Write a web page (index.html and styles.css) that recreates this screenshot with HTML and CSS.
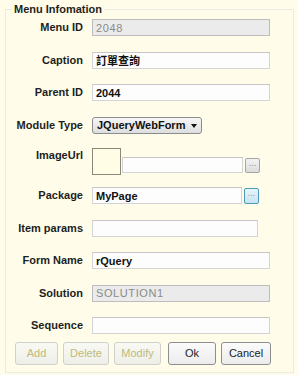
FILE: index.html
```html
<!DOCTYPE html>
<html lang="en">
<head>
<meta charset="UTF-8">
<meta name="viewport" content="width=device-width, initial-scale=1.0">
<title>Menu Infomation</title>
<link rel="stylesheet" href="styles.css">
</head>
<body>

<fieldset class="panel">
    <legend>Menu Infomation</legend>

    <div class="rows">
        <div class="row">
            <label>Menu ID</label>
            <input type="text" class="field locked" value="2048" readonly>
        </div>
        <div class="row">
            <label>Caption</label>
            <input type="text" class="field" value="訂單查詢">
        </div>
        <div class="row">
            <label>Parent ID</label>
            <input type="text" class="field" value="2044">
        </div>
        <div class="row">
            <label>Module Type</label>
            <div class="select">JQueryWebForm<span class="arrow"></span></div>
        </div>
        <div class="row tall">
            <label>ImageUrl</label>
            <div class="thumb"></div>
            <input type="text" class="field url">
            <button class="more">...</button>
        </div>
        <div class="row close">
            <label>Package</label>
            <input type="text" class="field short" value="MyPage">
            <button class="more active">...</button>
        </div>
        <div class="row">
            <label>Item params</label>
            <input type="text" class="field mid">
        </div>
        <div class="row">
            <label>Form Name</label>
            <input type="text" class="field" value="rQuery">
        </div>
        <div class="row">
            <label>Solution</label>
            <input type="text" class="field locked" value="SOLUTION1" readonly>
        </div>
        <div class="row">
            <label>Sequence</label>
            <input type="text" class="field">
        </div>
    </div>

    <div class="actions">
        <button class="btn off w-add">Add</button>
        <button class="btn off w-del">Delete</button>
        <button class="btn off w-mod">Modify</button>
        <button class="btn w-ok">Ok</button>
        <button class="btn w-cancel">Cancel</button>
    </div>
</fieldset>

</body>
</html>
```

FILE: styles.css
```css
body {
    font-family: 'Liberation Sans', Arial, sans-serif;
    font-size: 11px;
    margin: 0;
    padding: 0;
    background-color: #fffde9;
    color: #1e1e1e;
}
.panel {
    box-sizing: border-box;
    width: 289px;
    margin: 3px 0 4px 5px;
    padding: 0 0 7px 0;
    border: 1px solid #ebebe2;
    min-width: 0;
}
.panel legend {
    font-weight: bold;
    line-height: 13px;
    padding: 0 2px;
    margin-left: 6px;
}
.rows {
    padding-top: 3px;
}
.row {
    display: flex;
    align-items: center;
    height: 17px;
    margin-top: 15.5px;
}
.row:first-child {
    margin-top: 0;
}
.row label {
    flex: 0 0 77px;
    margin-right: 9px;
    text-align: right;
    font-weight: bold;
    line-height: 13px;
}
.row.tall {
    height: 27px;
    margin-top: 14px;
    align-items: flex-end;
}
.row.tall label {
    align-self: flex-start;
    padding-top: 1px;
}
.row.close {
    margin-top: 12.5px;
}
.field {
    box-sizing: border-box;
    width: 178px;
    height: 17px;
    margin: 0;
    padding: 0 3px;
    border: 1px solid #d4d4d4;
    border-top-color: #c6c6c6;
    background-color: #fdfdfd;
    font-family: 'Liberation Sans', 'Noto Sans CJK TC', sans-serif;
    font-size: 11px;
    font-weight: bold;
    color: #111;
    outline: none;
}
.field.locked {
    background-color: #ebebeb;
    border-color: #bdbdbd;
    color: #8a8a8a;
    font-weight: normal;
    letter-spacing: 0.6px;
}
.field.short {
    width: 150px;
}
.field.mid {
    width: 166px;
}
.field.url {
    width: 121px;
    height: 16px;
    margin: 0 0 2px 1px;
}
.thumb {
    box-sizing: border-box;
    width: 29px;
    height: 27px;
    border: 1px solid #8d8775;
    background-color: #fffde6;
}
.more {
    box-sizing: border-box;
    width: 15px;
    height: 15px;
    margin: 0 0 0 2px;
    padding: 0 0 3px 0;
    border: 1px solid #a5a5a5;
    border-radius: 2px;
    background: linear-gradient(#f2f2f2, #dcdcdc);
    color: #8f8f8f;
    font-family: 'DejaVu Sans', sans-serif;
    font-size: 8px;
    line-height: 8px;
    letter-spacing: 0;
}
.row.tall .more {
    margin-bottom: 2px;
}
.more.active {
    height: 16px;
    border-color: #4d9bb8;
    background: linear-gradient(#e6f5fb, #c6e4f1);
    color: #c77f95;
}
.select {
    box-sizing: border-box;
    position: relative;
    width: 110px;
    height: 17px;
    padding-left: 4px;
    border: 1px solid #8c8c8c;
    border-radius: 3px;
    background: linear-gradient(#f6f6f6, #dedede);
    font-weight: bold;
    line-height: 15px;
    color: #111;
}
.arrow {
    position: absolute;
    right: 4px;
    top: 6px;
    border-left: 3px solid transparent;
    border-right: 3px solid transparent;
    border-top: 4px solid #111;
}
.actions {
    display: flex;
    gap: 5px;
    margin: 7.5px 0 0 9px;
}
.btn {
    box-sizing: border-box;
    height: 23px;
    padding: 0;
    border: 1px solid #8e8e8e;
    border-radius: 3px;
    background: linear-gradient(#fbfbfb, #ececec);
    font-family: 'Liberation Sans', Arial, sans-serif;
    font-size: 11px;
    color: #222;
}
.btn.off {
    border-color: #d0d0cc;
    background: linear-gradient(#f9f9f4, #efefe8);
    color: #c0b97a;
}
.w-add { width: 43px; }
.w-del { width: 46px; }
.w-mod { width: 47px; }
.w-ok { width: 48px; margin-left: 2px; }
.w-cancel { width: 50px; }
```
